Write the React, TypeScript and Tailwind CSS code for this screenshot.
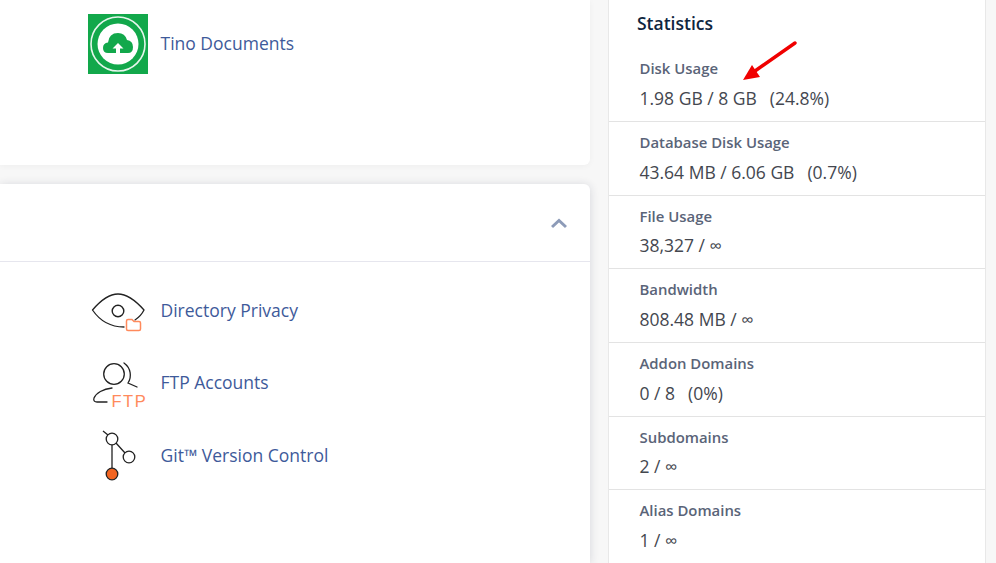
function Eye() {
  return (
    <svg width="60" height="60" viewBox="0 0 60 60" fill="none">
      <path d="M4.5 30 C13 20 21 14 30 14 C39 14 48 21 56 30 C54 34 50 38 47 40 M4.5 30 C12 41 22 47 36 47" stroke="#222" strokeWidth="1.3" strokeLinecap="round" />
      <circle cx="30" cy="31" r="5.8" stroke="#222" strokeWidth="1.4" />
      <path d="M38.5 41 Q38.5 39.5 40 39.5 H44 L46 41.5 H51 Q52.5 41.5 52.5 43 V49 Q52.5 50.5 51 50.5 H40 Q38.5 50.5 38.5 49 Z" stroke="#ff8a5c" strokeWidth="1.5" fill="#fff" />
    </svg>
  );
}
function Ftp() {
  return (
    <div className="relative h-[60px] w-[60px]">
      <svg width="60" height="60" viewBox="0 0 60 60" fill="none" className="absolute left-0 top-0">
        <circle cx="26" cy="22" r="10.3" stroke="#222" strokeWidth="1.3" />
        <path d="M36 11 C43 16 44 25 40 31 L49 35 M24 36 C15 37 8 41 6 46 C5 49 7 50 9 50 H19" stroke="#222" strokeWidth="1.3" strokeLinecap="round" />
      </svg>
      <span className="absolute left-[23.5px] top-[39px] text-[16.5px] leading-[20px] tracking-[1.5px] text-[#ff8a5c] font-['Liberation_Sans',sans-serif]">FTP</span>
    </div>
  );
}
function Git() {
  return (
    <svg width="60" height="60" viewBox="0 0 60 60" fill="none">
      <path d="M15 6 L20 10 M24 20 V43 M28 18 L37 28" stroke="#222" strokeWidth="1.3" />
      <circle cx="24" cy="14" r="5.8" stroke="#222" strokeWidth="1.3" fill="#fff" />
      <circle cx="41" cy="32" r="5.8" stroke="#222" strokeWidth="1.3" fill="#fff" />
      <circle cx="24" cy="49" r="5.8" stroke="#222" strokeWidth="1.3" fill="#f26522" />
    </svg>
  );
}
function Tino() {
  return (
    <svg width="60" height="60" viewBox="0 0 60 60" className="block">
      <rect width="60" height="60" fill="#12a84b" />
      <circle cx="30" cy="30" r="27" fill="none" stroke="#e6f6ec" strokeWidth="1.6" />
      <circle cx="30" cy="30" r="20.5" fill="#fff" />
      <path d="M20 39 Q15 39 15 34 Q15 29 20 28.5 Q21 19 30 19 Q37 19 39 26 Q45 27 45 33 Q45 39 40 39 H32 V34.5 H35.5 L30 29 L24.5 34.5 H28 V39 Z" fill="#12a84b" />
    </svg>
  );
}
function Row({ icon, label, className, textClass }: { icon: React.ReactNode; label: string; className: string; textClass?: string }) {
  return (
    <div className={`flex items-center pl-[88px] ${className}`}>
      <div className="h-[60px] w-[60px] shrink-0">{icon}</div>
      <a className={`ml-[12.5px] text-[17.5px] leading-[24px] text-[#3e5a9a] ${textClass ?? ""}`}>{label}</a>
    </div>
  );
}
function Stat({ label, value, extra, last }: { label: string; value: string; extra?: string; last?: boolean }) {
  return (
    <div className={`h-[73.65px] shrink-0 pl-[30.5px] pt-[10px] ${last ? "" : "border-b border-[#e3e3e3]"}`}>
      <div className="text-[14.9px] font-semibold leading-[20px] text-[#5a6478]">{label}</div>
      <div className="mt-[7.8px] whitespace-pre text-[17.5px] leading-[24px] text-[#44474f]">
        {value}
        {extra ? <span className="ml-[13px]">{extra}</span> : null}
      </div>
    </div>
  );
}
export default function App() {
  return (
    <div className="flex h-[563px] w-[996px] overflow-hidden bg-[#f7f7f7] font-['Open_Sans',sans-serif]">
      <div className="flex w-[590px] shrink-0 flex-col gap-[19px]">
        <div className="h-[165px] shrink-0 rounded-br-[6px] bg-white pt-[14px] shadow-[0_1px_6px_rgba(0,0,0,0.04)]">
          <Row icon={<Tino />} label="Tino Documents" className="" textClass="mb-[2px]" />
        </div>
        <div className="flex-1 rounded-tr-[6px] bg-white shadow-[0_1px_10px_rgba(30,40,70,0.16)]">
          <div className="flex h-[78px] items-center justify-end border-b border-[#e6e6ee] pr-[23px]">
            <svg width="16" height="12" viewBox="0 0 16 12" fill="none">
              <path d="M1 10 L8 3.5 L15 10" stroke="#8d9bb8" strokeWidth="3" />
            </svg>
          </div>
          <Row icon={<Eye />} label="Directory Privacy" className="mt-[18px]" />
          <Row icon={<Ftp />} label="FTP Accounts" className="mt-[12px]" />
          <Row icon={<Git />} label="Git™ Version Control" className="mt-[13px]" />
        </div>
      </div>
      <div className="ml-[18px] flex w-[378px] shrink-0 flex-col border-x border-[#e8e8e8] bg-white">
        <div className="h-[48.3px] shrink-0 pl-[28px] pt-[9px] text-[17.5px] font-semibold leading-[28px] text-[#0f2540]">Statistics</div>
        <div className="relative">
          <svg width="60" height="42" viewBox="0 0 60 42" fill="none" className="absolute left-[130px] top-[-7px]">
            <path d="M56 2 L16 30" stroke="#f00000" strokeWidth="3.4" strokeLinecap="round" />
            <path d="M4 39 L13 24 L21 36 Z" fill="#f00000" />
          </svg>
          <Stat label="Disk Usage" value="1.98 GB / 8 GB" extra="(24.8%)" />
        </div>
        <Stat label="Database Disk Usage" value="43.64 MB / 6.06 GB" extra="(0.7%)" />
        <Stat label="File Usage" value="38,327 / ∞" />
        <Stat label="Bandwidth" value="808.48 MB / ∞" />
        <Stat label="Addon Domains" value="0 / 8" extra="(0%)" />
        <Stat label="Subdomains" value="2 / ∞" />
        <Stat label="Alias Domains" value="1 / ∞" last />
      </div>
    </div>
  );
}
